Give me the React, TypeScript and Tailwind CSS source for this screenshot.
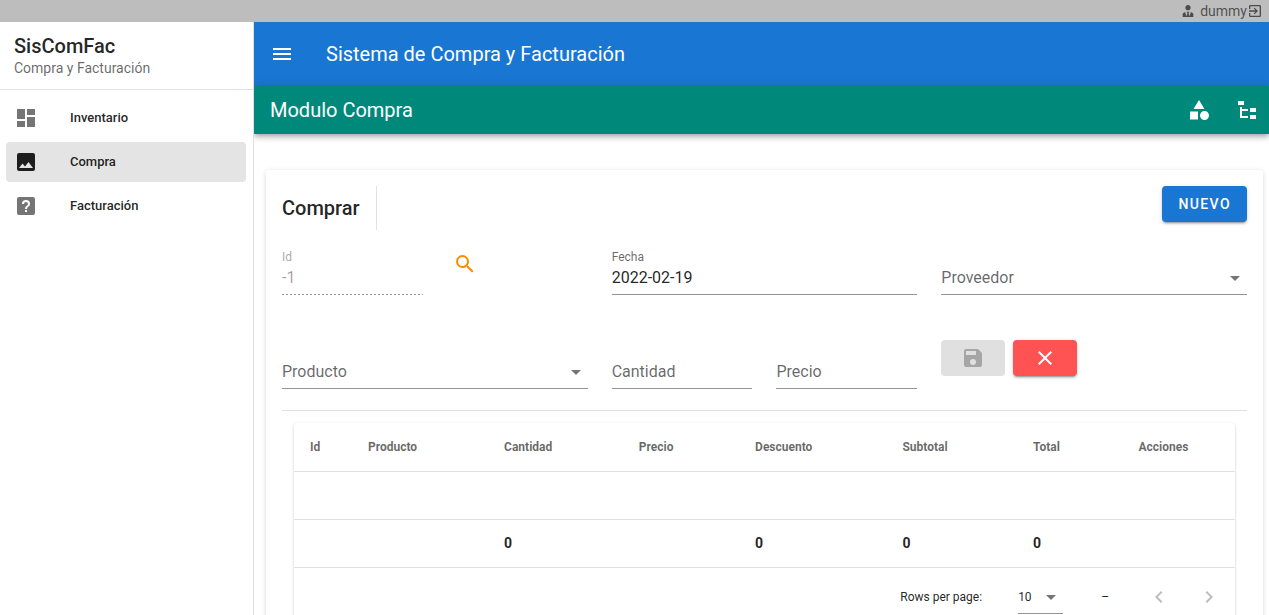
import React from "react";

const icons = {
  menu: "M3,6H21V8H3V6M3,11H21V13H3V11M3,16H21V18H3V16Z",
  dashboard: "M13,3V9H21V3M13,21H21V11H13M3,21H11V15H3M3,13H11V3H3V13Z",
  image:
    "M8.5,13.5L11,16.5L14.5,12L19,18H5M21,19V5C21,3.89 20.1,3 19,3H5A2,2 0 0,0 3,5V19A2,2 0 0,0 5,21H19A2,2 0 0,0 21,19Z",
  help: "M11,18H13V16H11V18M12,6A4,4 0 0,0 8,10H10A2,2 0 0,1 12,8A2,2 0 0,1 14,10C14,12 11,11.75 11,15H13C13,12.75 16,12.5 16,10A4,4 0 0,0 12,6M5,3H19A2,2 0 0,1 21,5V19A2,2 0 0,1 19,21H5A2,2 0 0,1 3,19V5A2,2 0 0,1 5,3Z",
  tree: "M3,3H9V7H3V3M15,10H21V14H15V10M15,17H21V21H15V17M13,13H7V18H13V20H5V9H7V11H13V13Z",
  shape:
    "M11,13.5V21.5H3V13.5H11M12,2L17.5,11H6.5L12,2M17.5,13C20,13 22,15 22,17.5C22,20 20,22 17.5,22C15,22 13,20 13,17.5C13,15 15,13 17.5,13Z",
  search:
    "M9.5,3A6.5,6.5 0 0,1 16,9.5C16,11.11 15.41,12.59 14.44,13.73L14.71,14H15.5L20.5,19L19,20.5L14,15.5V14.71L13.73,14.44C12.59,15.41 11.11,16 9.5,16A6.5,6.5 0 0,1 3,9.5A6.5,6.5 0 0,1 9.5,3M9.5,5C7,5 5,7 5,9.5C5,12 7,14 9.5,14C12,14 14,12 14,9.5C14,7 12,5 9.5,5Z",
  save: "M15,9H5V5H15M12,19A3,3 0 0,1 9,16A3,3 0 0,1 12,13A3,3 0 0,1 15,16A3,3 0 0,1 12,19M17,3H5C3.89,3 3,3.9 3,5V19A2,2 0 0,0 5,21H19A2,2 0 0,0 21,19V7L17,3Z",
  close:
    "M19,6.41L17.59,5L12,10.59L6.41,5L5,6.41L10.59,12L5,17.59L6.41,19L12,13.41L17.59,19L19,17.59L13.41,12L19,6.41Z",
  caret: "M7,10L12,15L17,10H7Z",
  left: "M15.41,16.58L10.83,12L15.41,7.41L14,6L8,12L14,18L15.41,16.58Z",
  right: "M8.59,16.58L13.17,12L8.59,7.41L10,6L16,12L10,18L8.59,16.58Z",
  user: "M12 3C14.21 3 16 4.79 16 7S14.21 11 12 11 8 9.21 8 7 9.79 3 12 3M16 13.54C16 14.6 15.72 17.07 13.81 19.83L13 15L13.94 13.12C13.32 13.05 12.67 13 12 13S10.68 13.05 10.06 13.12L11 15L10.19 19.83C8.28 17.07 8 14.6 8 13.54C5.61 14.24 4 15.5 4 17V21H20V17C20 15.5 18.4 14.24 16 13.54Z",
  exit: "M19,3H5C3.89,3 3,3.89 3,5V9H5V5H19V19H5V15H3V19A2,2 0 0,0 5,21H19A2,2 0 0,0 21,19V5C21,3.89 20.1,3 19,3M10.08,15.58L11.5,17L16.5,12L11.5,7L10.08,8.41L12.67,11H3V13H12.67L10.08,15.58Z",
};

type IconName = keyof typeof icons;

function Icon({ name, className = "size-6" }: { name: IconName; className?: string }) {
  return (
    <svg viewBox="0 0 24 24" className={`shrink-0 ${className}`} fill="currentColor" fillRule="evenodd" aria-hidden="true">
      <path d={icons[name]} />
    </svg>
  );
}

const navItems: { icon: IconName; label: string; active?: boolean }[] = [
  { icon: "dashboard", label: "Inventario" },
  { icon: "image", label: "Compra", active: true },
  { icon: "help", label: "Facturación" },
];

const columns: { label: string; sortable: boolean; total?: string }[] = [
  { label: "Id", sortable: false },
  { label: "Producto", sortable: true },
  { label: "Cantidad", sortable: true, total: "0" },
  { label: "Precio", sortable: true },
  { label: "Descuento", sortable: true, total: "0" },
  { label: "Subtotal", sortable: true, total: "0" },
  { label: "Total", sortable: true, total: "0" },
  { label: "Acciones", sortable: false },
];

function SelectField({ label }: { label: string }) {
  return (
    <div className="relative border-b border-black/42 pb-1">
      <select
        aria-label={label}
        defaultValue=""
        className="block h-6 w-full appearance-none bg-transparent text-base text-black/60 outline-none"
      >
        <option value="">{label}</option>
      </select>
      <Icon name="caret" className="pointer-events-none absolute top-0 right-0 size-6 text-black/54" />
    </div>
  );
}

function TextField({ label }: { label: string }) {
  return (
    <input
      type="text"
      aria-label={label}
      placeholder={label}
      className="block h-[29px] w-full min-w-0 border-b border-black/42 bg-transparent pb-1.5 text-base text-black/87 outline-none placeholder:text-black/60"
    />
  );
}

function Sidebar() {
  return (
    <aside className="relative z-10 w-[254px] shrink-0 border-r border-black/12 bg-white">
      <div className="border-b border-black/12 px-3.5 pt-3 pb-[11px]">
        <div className="text-xl leading-6 font-medium">SisComFac</div>
        <div className="text-sm leading-5 text-black/60">Compra y Facturación</div>
      </div>
      <nav className="flex flex-col gap-1 py-2 pr-[7px] pl-1.5">
        {navItems.map((item) => (
          <a
            key={item.label}
            href="#"
            className={`flex h-10 items-center gap-8 rounded px-2 text-[13px] font-medium ${item.active ? "bg-[#e4e4e4]" : ""}`}
          >
            <Icon name={item.icon} className={item.active ? "size-6 text-black/87" : "size-6 text-black/54"} />
            {item.label}
          </a>
        ))}
      </nav>
    </aside>
  );
}

function PurchaseTable() {
  return (
    <div className="mx-3 mt-3 rounded bg-white shadow-[0_1px_3px_rgba(0,0,0,0.2)]">
      <table className="w-full border-collapse text-left">
        <thead>
          <tr className="h-12 border-b border-black/12">
            {columns.map((c) => (
              <th
                key={c.label}
                className={`text-xs font-bold text-black/60 ${c.sortable ? "pr-[34px] pl-4" : "px-4"}`}
              >
                {c.label}
              </th>
            ))}
          </tr>
        </thead>
        <tbody>
          <tr className="h-12 border-b border-black/12">
            <td colSpan={columns.length} />
          </tr>
          <tr className="h-12 border-b border-black/12">
            {columns.map((c) => (
              <td key={c.label} className="px-4 text-sm font-bold">
                {c.total}
              </td>
            ))}
          </tr>
        </tbody>
      </table>
      <div className="flex h-[59px] items-center justify-end pr-2 text-xs">
        <label htmlFor="rows">Rows per page:</label>
        <div className="relative ml-9 border-b border-black/42">
          <select id="rows" className="block h-8 w-[45px] appearance-none bg-transparent text-xs outline-none">
            <option>10</option>
          </select>
          <Icon name="caret" className="pointer-events-none absolute top-1 right-0 size-6 text-black/54" />
        </div>
        <span className="mr-8 ml-[38px]">–</span>
        <div className="flex gap-3.5 text-black/26">
          <button type="button" disabled aria-label="Previous page" className="flex size-9 items-center justify-center">
            <Icon name="left" />
          </button>
          <button type="button" disabled aria-label="Next page" className="flex size-9 items-center justify-center">
            <Icon name="right" />
          </button>
        </div>
      </div>
    </div>
  );
}

function PurchaseCard() {
  return (
    <section className="mt-9 mr-1.5 ml-3 rounded bg-white p-4 shadow-[0_1px_5px_rgba(0,0,0,0.16)]">
      <div className="flex items-start justify-between">
        <h2 className="flex h-11 items-center border-r border-black/12 pr-4 text-xl font-medium">Comprar</h2>
        <button
          type="button"
          className="h-9 rounded bg-[#1976d2] px-4 text-sm font-medium tracking-widest text-white uppercase shadow-[0_3px_1px_-2px_rgba(0,0,0,0.2),0_2px_2px_rgba(0,0,0,0.14),0_1px_5px_rgba(0,0,0,0.12)]"
        >
          Nuevo
        </button>
      </div>

      <div className="mt-4 grid grid-cols-3 items-end gap-x-6 gap-y-[45px]">
        <div className="grid grid-cols-2 gap-6">
          <div className="pt-[3px]">
            <label htmlFor="id" className="block text-xs leading-4 text-black/38">
              Id
            </label>
            <input
              id="id"
              disabled
              defaultValue="-1"
              className="mt-px block h-[29px] w-full min-w-0 bg-[repeating-linear-gradient(to_right,rgba(0,0,0,0.42)_0px,rgba(0,0,0,0.42)_2px,transparent_2px,transparent_4px)] bg-[length:100%_1px] bg-bottom bg-no-repeat pb-[7px] text-base text-black/38"
            />
          </div>
          <button type="button" aria-label="Buscar" className="flex size-9 items-center justify-center text-[#fb8c00]">
            <Icon name="search" />
          </button>
        </div>
        <div className="pt-[3px]">
          <label htmlFor="fecha" className="block text-xs leading-4 text-black/60">
            Fecha
          </label>
          <input
            id="fecha"
            readOnly
            defaultValue="2022-02-19"
            className="mt-px block h-[29px] w-full min-w-0 border-b border-black/42 bg-transparent pb-1.5 text-base outline-none"
          />
        </div>
        <SelectField label="Proveedor" />

        <SelectField label="Producto" />
        <div className="grid grid-cols-2 gap-6">
          <TextField label="Cantidad" />
          <TextField label="Precio" />
        </div>
        <div className="flex h-[49px] items-start gap-2">
          <button
            type="button"
            disabled
            aria-label="Guardar"
            className="flex h-9 w-16 items-center justify-center rounded bg-[#e0e0e0] text-black/26"
          >
            <Icon name="save" />
          </button>
          <button
            type="button"
            aria-label="Cancelar"
            className="flex h-9 w-16 items-center justify-center rounded bg-[#ff5252] text-white shadow-[0_3px_1px_-2px_rgba(0,0,0,0.2),0_2px_2px_rgba(0,0,0,0.14),0_1px_5px_rgba(0,0,0,0.12)]"
          >
            <Icon name="close" />
          </button>
        </div>
      </div>

      <hr className="mt-[21px] border-black/12" />
      <PurchaseTable />
    </section>
  );
}

export default function App() {
  return (
    <div className="flex min-h-screen flex-col bg-white font-[Roboto,sans-serif] text-black/87">
      <div className="relative z-20 flex h-[22px] shrink-0 items-center justify-end bg-[#bdbdbd] pr-1.5 text-sm leading-5 text-black/60">
        <Icon name="user" className="mr-1 size-4" />
        <span>dummy</span>
        <a href="#" aria-label="Salir">
          <Icon name="exit" className="size-4" />
        </a>
      </div>
      <div className="flex grow">
        <Sidebar />
        <div className="min-w-0 grow">
          <header className="flex h-16 items-center gap-8 bg-[#1976d2] px-4 text-white">
            <button type="button" aria-label="Menu">
              <Icon name="menu" />
            </button>
            <h1 className="text-xl">Sistema de Compra y Facturación</h1>
          </header>
          <div className="relative flex h-12 items-center bg-[#00897b] pr-2.5 pl-4 text-white shadow-[0_2px_4px_-1px_rgba(0,0,0,0.2),0_4px_5px_rgba(0,0,0,0.14),0_1px_10px_rgba(0,0,0,0.12)]">
            <div className="grow text-xl">Modulo Compra</div>
            <div className="flex gap-6">
              <button type="button" aria-label="Categorías">
                <Icon name="shape" />
              </button>
              <button type="button" aria-label="Árbol">
                <Icon name="tree" />
              </button>
            </div>
          </div>
          <main>
            <PurchaseCard />
          </main>
        </div>
      </div>
    </div>
  );
}
